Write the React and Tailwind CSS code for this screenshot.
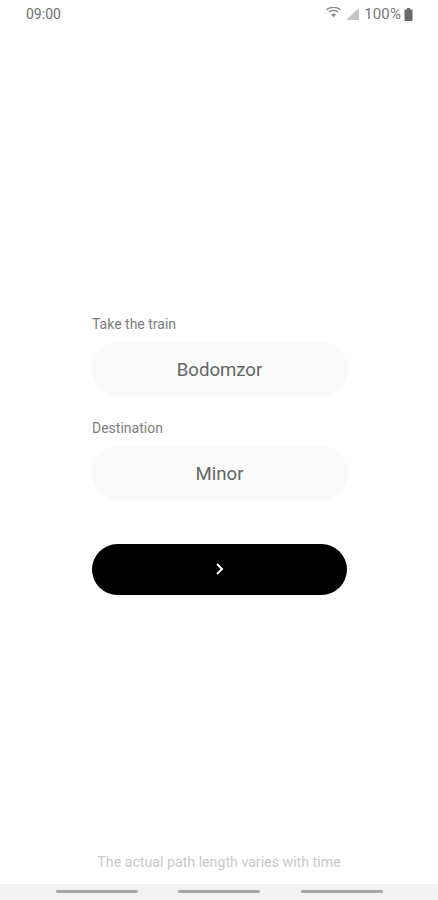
const App = () => {
  return (
    <div className="flex h-[900px] w-[438px] flex-col overflow-hidden bg-white font-['Roboto',sans-serif]">
      {/* status bar */}
      <div className="flex h-[28px] items-center justify-between pr-[25px] pl-[26px]">
        <span className="text-sm text-[#6f6f6f]">09:00</span>
        <div className="flex items-center">
          <svg width="15" height="11" viewBox="0 0 15 11" className="mr-[5px] mb-[3px]">
            <path d="M0.5 2.8C4.5 -0.4 10.5 -0.4 14.5 2.8" fill="none" stroke="#8a8a8a" strokeWidth="1.4" />
            <path d="M2.8 5C5.5 3 9.5 3 12.2 5" fill="none" stroke="#8a8a8a" strokeWidth="1.4" />
            <path d="M5 7.2L7.5 10.5L10 7.2C8.5 6.2 6.5 6.2 5 7.2Z" fill="#8a8a8a" />
          </svg>
          <svg width="13" height="12" viewBox="0 0 13 12" className="mr-[5px]">
            <path d="M0 12L13 0V12Z" fill="#c4c4c4" />
          </svg>
          <span className="text-[15px] tracking-[0.1px] text-[#777777]">100%</span>
          <svg width="9" height="13" viewBox="0 0 9 13" className="ml-[3px]">
            <path d="M3 0H6V1.5H8.5V13H0.5V1.5H3Z" fill="#6a6a6a" />
          </svg>
        </div>
      </div>

      {/* form */}
      <div className="mt-[287px] flex flex-col px-[92px]">
        <label className="text-sm leading-[18px] text-[#7d7d7d]">Take the train</label>
        <div className="mt-[9px] flex h-[54px] w-[256px] items-center justify-center rounded-full bg-[#fafafa] pt-[3px] pr-[1px] text-[18.6px] text-[#666666]">
          Bodomzor
        </div>
        <label className="mt-[23px] text-sm leading-[18px] text-[#7d7d7d]">Destination</label>
        <div className="mt-[9px] flex h-[54px] w-[256px] items-center justify-center rounded-full bg-[#fafafa] pt-[3px] pr-[1px] text-[18.6px] text-[#666666]">
          Minor
        </div>
        <button className="mt-[44px] flex h-[51px] w-[255px] items-center justify-center rounded-full bg-black">
          <svg width="10" height="14" viewBox="0 0 10 14" className="mb-[1px]">
            <path d="M2 2L7 7L2 12" fill="none" stroke="#ffffff" strokeWidth="2" />
          </svg>
        </button>
      </div>

      {/* hint + nav bar */}
      <div className="mt-auto text-center text-[14.2px] leading-[20px] text-[#c9c9c9]">The actual path length varies with time</div>
      <div className="mt-[12px] flex h-[16px] justify-center gap-[40.5px] bg-[#f2f2f2] pt-[6px] pl-[0.5px]">
        <div className="h-[3px] w-[82px] rounded-full bg-[#a8a8a8]" />
        <div className="h-[3px] w-[82px] rounded-full bg-[#a8a8a8]" />
        <div className="h-[3px] w-[82px] rounded-full bg-[#a8a8a8]" />
      </div>
    </div>
  )
}

export default App
